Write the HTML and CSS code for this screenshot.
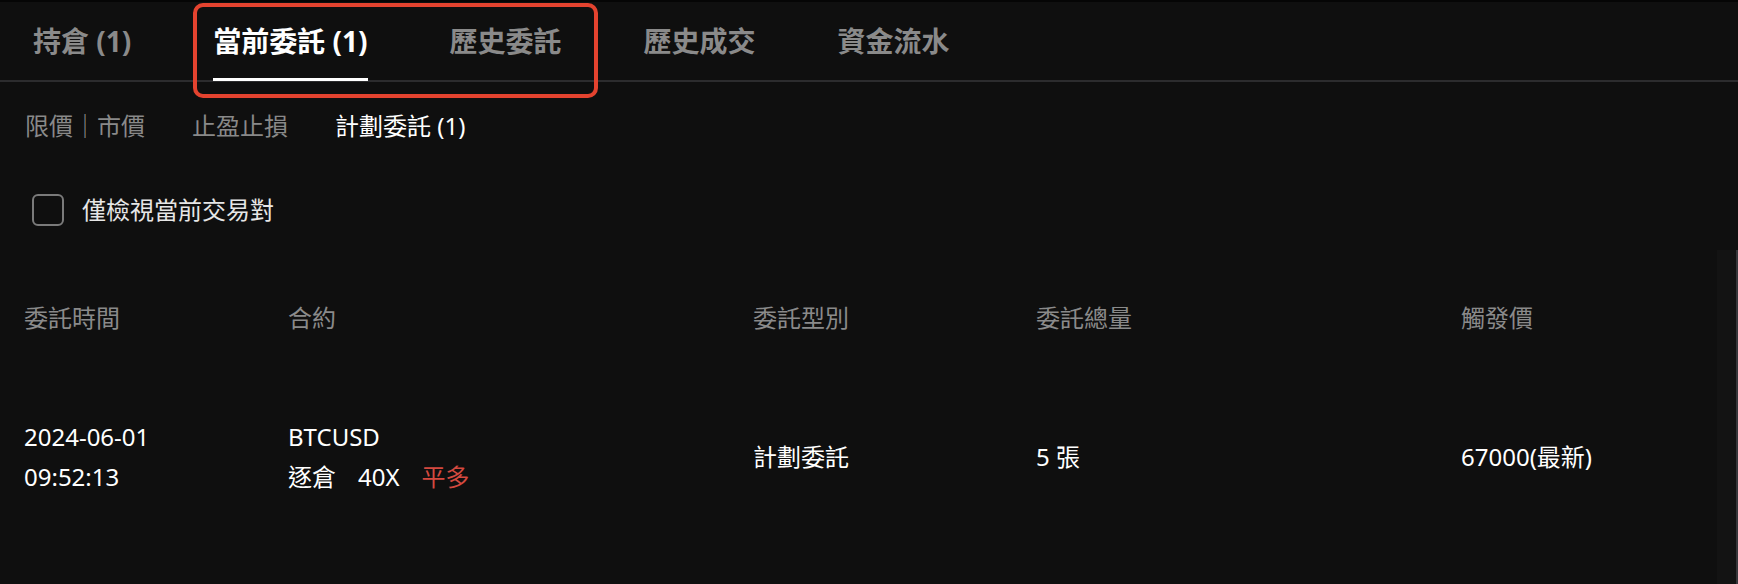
FILE: index.html
```html
<!DOCTYPE html>
<html lang="zh-Hant">
<head>
  <meta charset="UTF-8">
  <meta name="viewport" content="width=device-width, initial-scale=1.0">
  <title>當前委託</title>
  <link rel="stylesheet" href="styles.css">
</head>
<body>
  <nav class="tabs">
    <div class="tab">持倉 (1)</div>
    <div class="tab active">當前委託 (1)</div>
    <div class="tab">歷史委託</div>
    <div class="tab">歷史成交</div>
    <div class="tab">資金流水</div>
  </nav>
  <div class="highlight"></div>

  <div class="subtabs">
    <div class="subtab">限價｜市價</div>
    <div class="subtab">止盈止損</div>
    <div class="subtab active">計劃委託 (1)</div>
  </div>

  <label class="filter">
    <span class="checkbox"></span>
    <span>僅檢視當前交易對</span>
  </label>

  <div class="table">
    <div class="row head">
      <div>委託時間</div>
      <div>合約</div>
      <div>委託型別</div>
      <div>委託總量</div>
      <div>觸發價</div>
    </div>
    <div class="row body">
      <div class="stack">
        <div>2024-06-01</div>
        <div>09:52:13</div>
      </div>
      <div class="stack">
        <div>BTCUSD</div>
        <div class="tags">
          <span>逐倉</span>
          <span>40X</span>
          <span class="sell">平多</span>
        </div>
      </div>
      <div class="single">計劃委託</div>
      <div class="single">5 張</div>
      <div class="single">67000(最新)</div>
    </div>
  </div>

  <div class="scrollbar"></div>
</body>
</html>
```

FILE: styles.css
```css
body {
  margin: 0;
  padding: 0;
  font-family: "Noto Sans", "Noto Sans CJK TC", sans-serif;
  background-color: #0f0f0f;
  color: #fff;
  min-height: 584px;
}

.tabs {
  display: flex;
  gap: 82px;
  height: 78px;
  padding-left: 33px;
  border-top: 2px solid #050505;
  border-bottom: 2px solid #2c2c2e;
}

.tab {
  position: relative;
  font-size: 28px;
  font-weight: 700;
  line-height: 78px;
  color: #8a8a8a;
}

.tab.active {
  color: #fff;
}

.tab.active::after {
  content: "";
  position: absolute;
  left: 0;
  right: 0;
  bottom: -1px;
  height: 3px;
  background: #fff;
}

.highlight {
  position: absolute;
  top: 3px;
  left: 193px;
  width: 405px;
  height: 95px;
  box-sizing: border-box;
  border: 4px solid #e4432f;
  border-radius: 10px;
}

.subtabs {
  display: flex;
  gap: 47px;
  margin-top: 26px;
  padding-left: 25px;
  font-size: 24px;
  line-height: 36px;
}

.subtab {
  color: #898989;
}

.subtab.active {
  color: #fff;
}

.filter {
  display: flex;
  align-items: center;
  gap: 18px;
  margin-top: 48px;
  padding-left: 32px;
  font-size: 24px;
  line-height: 36px;
  color: #e6e6e6;
}

.checkbox {
  width: 32px;
  height: 32px;
  box-sizing: border-box;
  border: 2px solid #7a7a7a;
  border-radius: 6px;
}

.table {
  margin-top: 72px;
  padding-left: 24px;
  font-size: 24px;
}

.row {
  display: grid;
  grid-template-columns: 264px 465px 283px 425px 1fr;
}

.head {
  line-height: 36px;
  color: #8a8a8a;
}

.body {
  margin-top: 81px;
  line-height: 40px;
  color: #fff;
}

.single {
  align-self: center;
}

.tags {
  display: flex;
  gap: 22px;
}

.sell {
  color: #d4493f;
}

.scrollbar {
  position: absolute;
  top: 250px;
  right: 0;
  width: 21px;
  height: 334px;
  background: #131313;
  border-right: 2px solid #37373b;
  box-sizing: border-box;
}
```
